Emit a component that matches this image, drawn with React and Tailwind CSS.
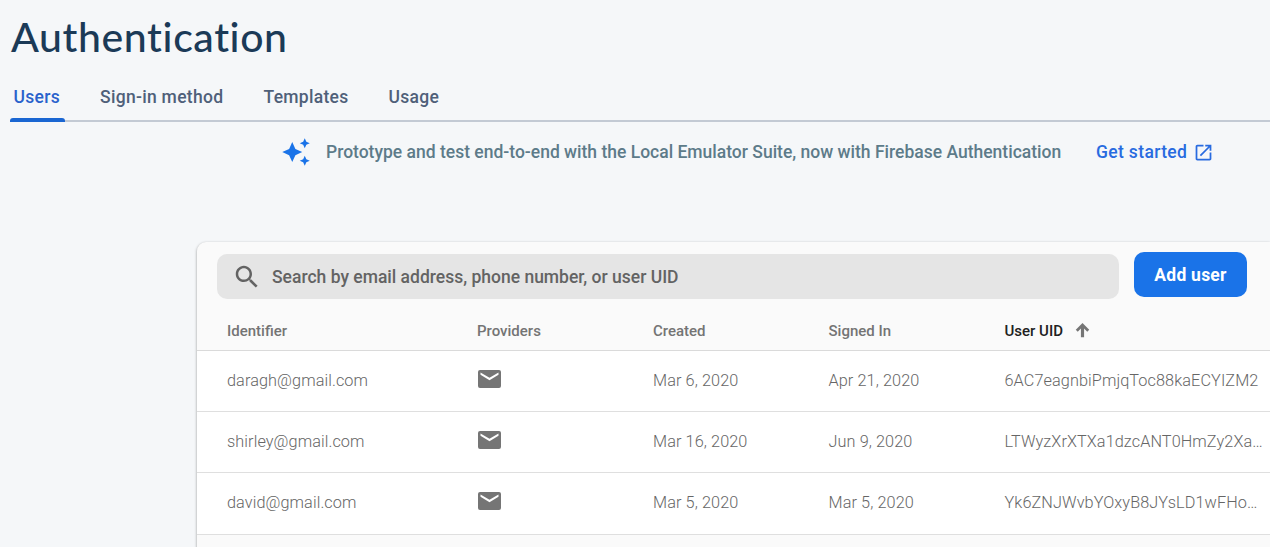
const COLUMNS = "grid grid-cols-[250px_176px_175.5px_176px_1fr] items-center pl-[30px]";

const users = [
  { email: "daragh@gmail.com", created: "Mar 6, 2020", signedIn: "Apr 21, 2020", uid: "6AC7eagnbiPmjqToc88kaECYIZM2" },
  { email: "shirley@gmail.com", created: "Mar 16, 2020", signedIn: "Jun 9, 2020", uid: "LTWyzXrXTXa1dzcANT0HmZy2Xa…" },
  { email: "david@gmail.com", created: "Mar 5, 2020", signedIn: "Mar 5, 2020", uid: "Yk6ZNJWvbYOxyB8JYsLD1wFHo…" },
];

function Icon({ d, className, viewBox = "0 0 24 24" }) {
  return (
    <svg viewBox={viewBox} fill="currentColor" className={className} aria-hidden="true">
      <path d={d} />
    </svg>
  );
}

const MAIL = "M2 0h19a2 2 0 0 1 2 2v14a2 2 0 0 1-2 2H2a2 2 0 0 1-2-2V2a2 2 0 0 1 2-2zM2.500 2.500v2.300l9 5.400 9-5.400V2.500l-9 5.300z";
const SEARCH = "M15.5 14h-.79l-.28-.27C15.41 12.59 16 11.11 16 9.5 16 5.91 13.09 3 9.5 3S3 5.91 3 9.5 5.91 16 9.5 16c1.61 0 3.09-.59 4.23-1.57l.27.28v.79l5 4.99L20.49 19l-4.99-5zm-6 0C7.01 14 5 11.99 5 9.5S7.01 5 9.5 5 14 7.01 14 9.5 11.99 14 9.5 14z";
const LAUNCH = "M19 19H5V5h7V3H5c-1.11 0-2 .9-2 2v14c0 1.1.89 2 2 2h14c1.1 0 2-.9 2-2v-7h-2v7zM14 3v2h3.59l-9.83 9.83 1.41 1.41L19 6.41V10h2V3h-7z";
const SPARK = "M19 9l1.25-2.75L23 5l-2.75-1.25L19 1l-1.25 2.75L15 5l2.75 1.25L19 9zm-7.5.5L9 4 6.500 9.500 1 12l5.500 2.500L9 20l2.500-5.500L17 12l-5.500-2.500zM19 15l-1.250 2.750L15 19l2.750 1.250L19 23l1.250-2.750L23 19l-2.750-1.250L19 15z";
const ARROW = "M14 20.500h-4V9.500l-4 4L3.500 11 12 2.500 20.500 11 18 13.500l-4-4v11z";

export default function App() {
  return (
    <div className="h-[547px] w-[1270px] overflow-hidden bg-[#f5f7f9] font-['Roboto',sans-serif]">
      <h1 className="h-[76px] pt-[13px] pl-[11px] font-['Lato',sans-serif] text-[41px] leading-[48px] font-medium tracking-[0.6px] text-[#1b3a57] [font-variant-ligatures:none]">
        Authentication
      </h1>
      <nav className="ml-[10px] flex h-[46px] border-b-2 border-[#c3cad4] text-[17.5px] leading-[42px] font-medium tracking-[0.3px] text-[#4f6079]">
        <div className="relative w-[90px] pl-[3.5px] text-[#2962cc]">
          Users
          <span className="absolute top-[42px] left-0 h-1 w-[55px] rounded-t-[3px] bg-[#1a66d2]" />
        </div>
        <div className="w-[163.5px]">Sign-in method</div>
        <div className="w-[125px]">Templates</div>
        <div>Usage</div>
      </nav>
      <div className="flex h-[60px] items-center text-[17.5px] font-medium text-[#5d7b89]">
        <Icon d={SPARK} className="ml-[281px] size-[30px] text-[#1a73e8]" />
        <span className="ml-[15px] w-[770px] whitespace-nowrap">
          Prototype and test end-to-end with the Local Emulator Suite, now with Firebase Authentication
        </span>
        <a className="w-[96.5px] tracking-[0.35px] whitespace-nowrap text-[#286be0]">Get started</a>
        <Icon d={LAUNCH} className="mt-px size-[21px] text-[#286be0]" />
      </div>
      <main className="mt-[60px] ml-[197px] h-[320px] rounded-tl-[9px] bg-[#fafafa] shadow-[0_1px_3px_rgba(0,0,0,0.4)]">
        <div className="flex h-[68px] items-start pt-[10px] pl-5">
          <div className="mt-[2px] flex h-[45px] w-[902px] items-center rounded-[10px] bg-[#e5e5e5] pl-[15px] text-[17.5px] font-medium text-[#636363]">
            <Icon d={SEARCH} className="size-[30px] text-[#636363]" />
            <span className="mt-[2px] ml-[10px]">Search by email address, phone number, or user UID</span>
          </div>
          <button className="ml-[15px] h-[45px] w-[113px] rounded-[10px] bg-[#1a73e8] pt-px text-[17.5px] font-bold tracking-[0.25px] text-white">
            Add user
          </button>
        </div>
        <div className={`${COLUMNS} h-[41px] border-b border-[#dadada] pt-[2px] text-[15px] font-medium text-[#747474]`}>
          <span>Identifier</span>
          <span>Providers</span>
          <span>Created</span>
          <span>Signed In</span>
          <span className="flex items-center text-[#212121]">
            User UID
            <Icon d={ARROW} className="-mt-[2px] ml-[10px] size-[19px] text-[#757575]" />
          </span>
        </div>
        {users.map((u) => (
          <div key={u.email} className={`${COLUMNS} h-[61px] border-b border-[#dfdfdf] bg-white text-[16.25px] font-light tracking-[0.09px] text-[#666] last:h-[62px] last:pb-px`}>
            <span>{u.email}</span>
            <Icon d={MAIL} viewBox="0 0 23 18" className="-mt-[5px] ml-px h-[18px] w-[23px] text-[#757575]" />
            <span>{u.created}</span>
            <span>{u.signedIn}</span>
            <span className="whitespace-nowrap">{u.uid}</span>
          </div>
        ))}
      </main>
    </div>
  );
}
